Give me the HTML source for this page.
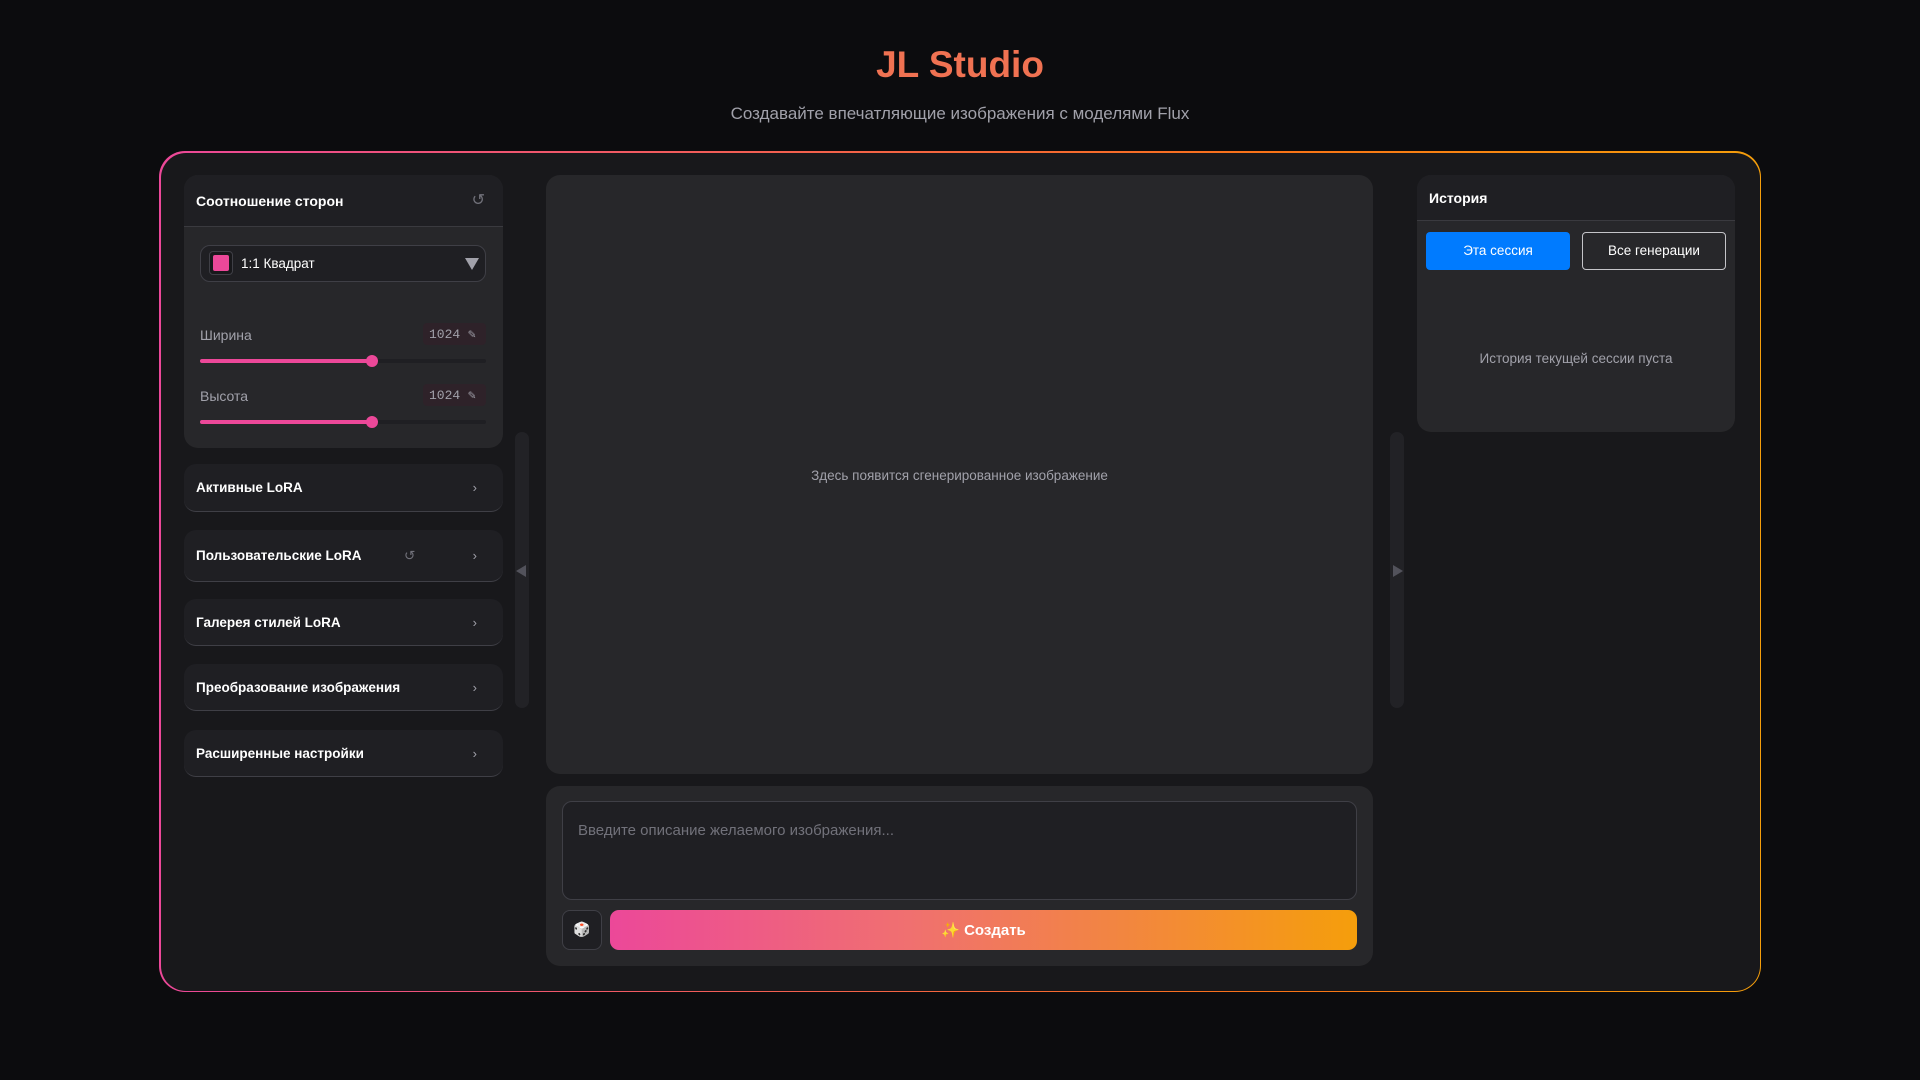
<!DOCTYPE html>
<html><head><meta charset="utf-8"><style>
*{box-sizing:border-box;margin:0;padding:0}
body{width:1920px;height:1080px;background:#0c0c0e;font-family:"Liberation Sans","DejaVu Sans",sans-serif;color:#fff;position:relative;overflow:hidden}
.abs{position:absolute}
h1{position:absolute;left:0;width:1920px;top:44px;text-align:center;font-size:37px;font-weight:bold;color:#f07252}
.sub{position:absolute;left:0;width:1920px;top:104px;text-align:center;font-size:17px;color:#a1a1aa}
.outer{left:159px;top:151px;width:1602px;height:841px;border-radius:26px;padding:1.5px;background:linear-gradient(90deg,#ec4899,#f97316 70%,#f59e0b)}
.outer>div{width:100%;height:100%;border-radius:25px;background:#18181b}
.panel{background:#27272a;border-radius:14px}
.hdr{background:#1f1f23;border-bottom:1px solid #3a3a3f;font-weight:bold;font-size:14px}
.acc{left:184px;width:319px;background:#1f1f23;border-radius:12px;border-bottom:1px solid #3f3f46;font-weight:bold;font-size:13.5px;padding-left:12px;display:flex;align-items:center}
.acc .ch{position:absolute;right:26px;color:#a1a1aa;font-size:13px;font-weight:normal}
.track{left:200px;width:286px;height:4px;background:#1f1f23;border-radius:2px}
.fill{height:4px;background:#ec4899;border-radius:2px;width:172px}
.knob{width:12px;height:12px;border-radius:50%;background:#ec4899;top:-4px;left:166px}
.val{width:63px;height:22px;background:#2e2229;border-radius:4px;font-family:"Liberation Mono",monospace;font-size:13px;color:#a1a1aa;padding:4px 0 0 6px}
.lbl{font-size:14px;color:#a1a1aa}
</style></head><body>
<h1>JL Studio</h1>
<div class="sub">Создавайте впечатляющие изображения с моделями Flux</div>
<div class="abs outer"><div></div></div>

<div class="abs panel" style="left:184px;top:175px;width:319px;height:273px;overflow:hidden">
 <div class="hdr" style="height:52px;padding:18px 12px">Соотношение сторон<span style="position:absolute;right:18px;top:15px;color:#71717a;font-weight:normal;font-size:16px">↺</span></div>
</div>
<div class="abs" style="left:200px;top:245px;width:286px;height:37px;border:1px solid #3f3f46;border-radius:10px;background:#1f1f23"></div>
<div class="abs" style="left:209px;top:251px;width:24px;height:24px;border:1px solid #3f3f46;border-radius:4px;background:#18181b"></div>
<div class="abs" style="left:213px;top:255px;width:16px;height:16px;background:#ec4899;border-radius:2px"></div>
<div class="abs" style="left:241px;top:256px;font-size:13.5px">1:1 Квадрат</div>
<div class="abs" style="left:465px;top:258px;width:0;height:0;border-left:7px solid transparent;border-right:7px solid transparent;border-top:12px solid #a1a1aa"></div>

<div class="abs lbl" style="left:200px;top:327px">Ширина</div>
<div class="abs val" style="left:423px;top:323px">1024 ✎</div>
<div class="abs track" style="top:359px"><div class="fill"></div><div class="abs knob"></div></div>
<div class="abs lbl" style="left:200px;top:388px">Высота</div>
<div class="abs val" style="left:423px;top:384px">1024 ✎</div>
<div class="abs track" style="top:420px"><div class="fill"></div><div class="abs knob"></div></div>

<div class="abs acc" style="top:464px;height:48px">Активные LoRA<span class="ch">›</span></div>
<div class="abs acc" style="top:530px;height:52px">Пользовательские LoRA<span style="position:absolute;left:220px;color:#71717a;font-weight:normal">↺</span><span class="ch">›</span></div>
<div class="abs acc" style="top:599px;height:47px">Галерея стилей LoRA<span class="ch">›</span></div>
<div class="abs acc" style="top:664px;height:47px">Преобразование изображения<span class="ch">›</span></div>
<div class="abs acc" style="top:730px;height:47px">Расширенные настройки<span class="ch">›</span></div>

<div class="abs" style="left:515px;top:432px;width:14px;height:276px;background:#222226;border-radius:7px"></div>
<div class="abs" style="left:516px;top:565px;width:0;height:0;border-top:6px solid transparent;border-bottom:6px solid transparent;border-right:10px solid #52525b"></div>
<div class="abs" style="left:1390px;top:432px;width:14px;height:276px;background:#222226;border-radius:7px"></div>
<div class="abs" style="left:1393px;top:565px;width:0;height:0;border-top:6px solid transparent;border-bottom:6px solid transparent;border-left:10px solid #52525b"></div>

<div class="abs panel" style="left:546px;top:175px;width:827px;height:599px"></div>
<div class="abs" style="left:546px;top:468px;width:827px;text-align:center;font-size:13.5px;color:#a1a1aa">Здесь появится сгенерированное изображение</div>

<div class="abs panel" style="left:546px;top:786px;width:827px;height:180px"></div>
<div class="abs" style="left:562px;top:801px;width:795px;height:99px;background:#1f1f23;border:1px solid #3f3f46;border-radius:10px;padding:20px 15px;font-size:15px;color:#71717a">Введите описание желаемого изображения...</div>
<div class="abs" style="left:562px;top:910px;width:40px;height:40px;background:#1f1f23;border:1px solid #3f3f46;border-radius:8px;text-align:center;padding-top:10px;font-size:14px">🎲</div>
<div class="abs" style="left:610px;top:910px;width:747px;height:40px;border-radius:9px;background:linear-gradient(90deg,#ec4899,#f07070 40%,#f59e0b);text-align:center;padding-top:11px;font-weight:bold;font-size:15px"><span style="color:#fbbf24">✨</span> Создать</div>

<div class="abs panel" style="left:1417px;top:175px;width:318px;height:257px;overflow:hidden">
 <div class="hdr" style="height:46px;padding:15px 12px">История</div>
</div>
<div class="abs" style="left:1426px;top:232px;width:144px;height:38px;background:#007bff;border-radius:4px;text-align:center;padding-top:11px;font-size:13.5px">Эта сессия</div>
<div class="abs" style="left:1582px;top:232px;width:144px;height:38px;border:1.5px solid #c4c4c8;border-radius:4px;text-align:center;padding-top:10px;font-size:13.5px;background:#27272a">Все генерации</div>
<div class="abs" style="left:1417px;top:351px;width:318px;text-align:center;font-size:13.5px;color:#a1a1aa">История текущей сессии пуста</div>
</body></html>
